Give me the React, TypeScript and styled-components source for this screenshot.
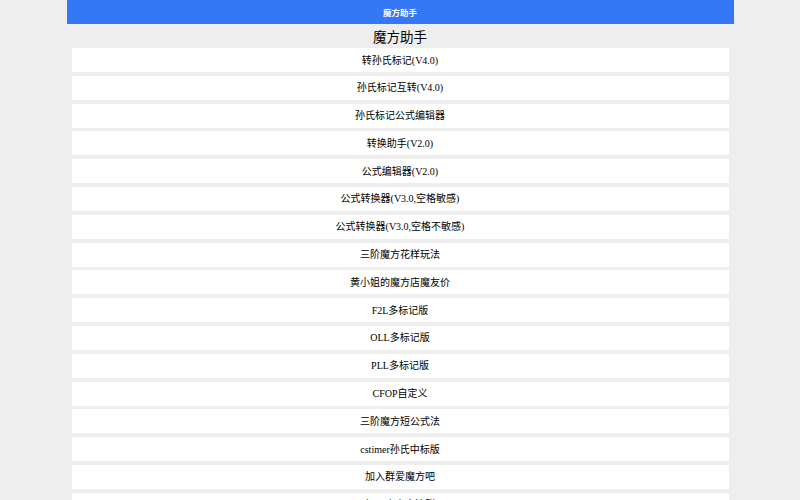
import { FC } from 'react';
import styled, { createGlobalStyle } from 'styled-components';

const GlobalStyle = createGlobalStyle`
	html, body {
		margin: 0;
		padding: 0;
		background: #eeeeee;
	}
	body {
		font-family: 'Liberation Serif', 'Noto Sans CJK SC', serif;
	}
`;

const links = [
	'转孙氏标记(V4.0)',
	'孙氏标记互转(V4.0)',
	'孙氏标记公式编辑器',
	'转换助手(V2.0)',
	'公式编辑器(V2.0)',
	'公式转换器(V3.0,空格敏感)',
	'公式转换器(V3.0,空格不敏感)',
	'三阶魔方花样玩法',
	'黄小姐的魔方店魔友价',
	'F2L多标记版',
	'OLL多标记版',
	'PLL多标记版',
	'CFOP自定义',
	'三阶魔方短公式法',
	'cstimer孙氏中标版',
	'加入群爱魔方吧',
	'加入魔方交流群',
];

const App: FC = () => {
	return (
		<Root>
			<GlobalStyle />
			<Header>魔方助手</Header>
			<Title>魔方助手</Title>
			<List>
				{links.map((label) => (
					<Item key={label}>{label}</Item>
				))}
			</List>
		</Root>
	);
};

const Root = styled.div`
	width: 667px;
	margin: 0 auto;
	background: #eeeeee;
`;

const Header = styled.div`
	height: 24px;
	padding-bottom: 1px;
	box-sizing: border-box;
	background: #3478f6;
	color: #ffffff;
	font-size: 8.5px;
	font-weight: bold;
	font-family: 'Noto Sans CJK SC', sans-serif;
	display: flex;
	align-items: center;
	justify-content: center;
`;

const Title = styled.div`
	height: 24px;
	display: flex;
	align-items: center;
	justify-content: center;
	font-size: 13.5px;
	color: #000000;
	font-family: 'Noto Sans CJK SC', sans-serif;
`;

const List = styled.div`
	display: flex;
	flex-direction: column;
	gap: 3.8px;
	padding: 0 5px;
`;

const Item = styled.div`
	height: 24px;
	padding-bottom: 2px;
	box-sizing: border-box;
	background: #ffffff;
	display: flex;
	align-items: center;
	justify-content: center;
	font-size: 10px;
	color: #000000;
	cursor: pointer;
`;

export default App;
